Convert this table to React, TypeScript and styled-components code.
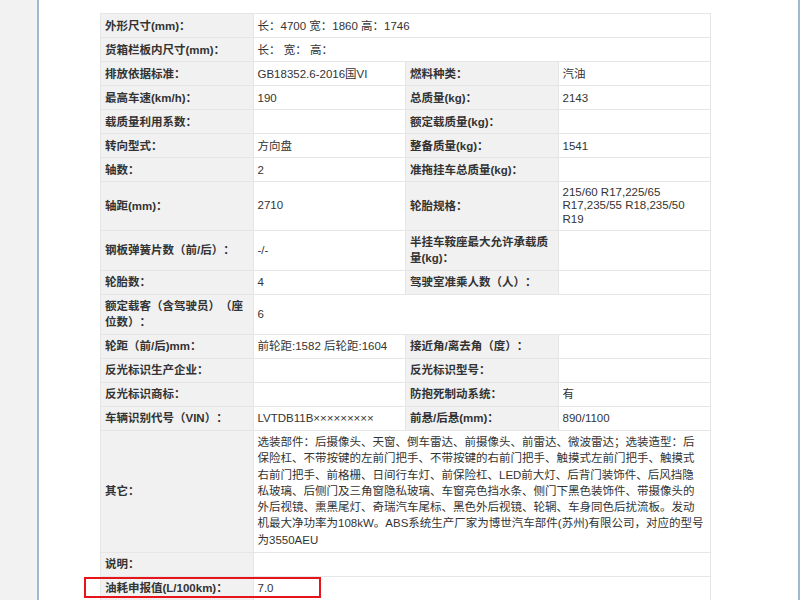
import React from "react";
import styled, { createGlobalStyle } from "styled-components";

const Global = createGlobalStyle`
  html, body {
    margin: 0;
    padding: 0;
    height: 600px;
    overflow: hidden;
    background: #f2f2f2;
  }
  * {
    text-spacing-trim: space-all;
  }
`;

const Page = styled.div`
  display: flex;
  min-height: 600px;
  background: #f2f2f2;
  font-family: "Liberation Sans", Arial, "Noto Sans CJK SC", sans-serif;
  font-size: 11.5px;
  color: #333;
`;

const Sheet = styled.div`
  position: relative;
  margin-left: 37px;
  width: 733px;
  min-height: 600px;
  background: #fff;
  border-left: 2px solid #a2b7d1;
  border-right: 2px solid #a2b7d1;
  padding: 13px 0 0 61px;
  box-sizing: content-box;
`;

const Table = styled.table`
  width: 611px;
  border-collapse: collapse;
  table-layout: fixed;
  border: 1px solid #e4e4e4;
`;

const Cell = styled.td<{ $lh?: number }>`
  border: 1px solid #e6e6e6;
  padding: 3.5px 6px 3.5px 4px;
  vertical-align: middle;
  line-height: ${(p) => (p.$lh ? `${p.$lh}px` : "16px")};
  text-spacing-trim: space-all;
`;

const Label = styled(Cell)`
  background: #f1f1f1;
  font-weight: bold;
  color: #333;
`;

const Value = styled(Cell)`
  background: #fff;
  color: #333;
`;

const Highlight = styled.div`
  position: absolute;
  left: 45px;
  top: 577px;
  width: 233px;
  height: 17px;
  border: 2px solid #e8141b;
`;

type Quad = { cells: [string, string, string, string]; lh?: number };
type Wide = { label: string; value: string; lh?: number };

const rows: Array<Quad | Wide> = [
  { label: "外形尺寸(mm)：", value: "长：4700 宽：1860 高：1746" },
  { label: "货箱栏板内尺寸(mm)：", value: "长： 宽： 高：" },
  { cells: ["排放依据标准：", "GB18352.6-2016国VI", "燃料种类：", "汽油"] },
  { cells: ["最高车速(km/h)：", "190", "总质量(kg)：", "2143"] },
  { cells: ["载质量利用系数：", "", "额定载质量(kg)：", ""] },
  { cells: ["转向型式：", "方向盘", "整备质量(kg)：", "1541"] },
  { cells: ["轴数：", "2", "准拖挂车总质量(kg)：", ""] },
  {
    cells: ["轴距(mm)：", "2710", "轮胎规格：", "215/60 R17,225/65 R17,235/55 R18,235/50 R19"],
    lh: 13.5,
  },
  { cells: ["钢板弹簧片数（前/后）：", "-/-", "半挂车鞍座最大允许承载质量(kg)：", ""] },
  { cells: ["轮胎数：", "4", "驾驶室准乘人数（人）：", ""] },
  { label: "额定载客（含驾驶员）（座位数）：", value: "6" },
  { cells: ["轮距（前/后)mm：", "前轮距:1582 后轮距:1604", "接近角/离去角（度）：", ""] },
  { cells: ["反光标识生产企业：", "", "反光标识型号：", ""] },
  { cells: ["反光标识商标：", "", "防抱死制动系统：", "有"] },
  { cells: ["车辆识别代号（VIN）：", "LVTDB11B×××××××××", "前悬/后悬(mm)：", "890/1100"] },
  {
    label: "其它：",
    value:
      "选装部件：后摄像头、天窗、倒车雷达、前摄像头、前雷达、微波雷达；选装造型：后保险杠、不带按键的左前门把手、不带按键的右前门把手、触摸式左前门把手、触摸式右前门把手、前格栅、日间行车灯、前保险杠、LED前大灯、后背门装饰件、后风挡隐私玻璃、后侧门及三角窗隐私玻璃、车窗亮色挡水条、侧门下黑色装饰件、带摄像头的外后视镜、熏黑尾灯、奇瑞汽车尾标、黑色外后视镜、轮辋、车身同色后扰流板。发动机最大净功率为108kW。ABS系统生产厂家为博世汽车部件(苏州)有限公司，对应的型号为3550AEU",
    lh: 16.3,
  },
  { label: "说明：", value: "" },
  { label: "油耗申报值(L/100km)：", value: "7.0" },
];

export default function App() {
  return (
    <>
      <Global />
      <Page>
        <Sheet>
          <Table>
            <colgroup>
              <col style={{ width: "25%" }} />
              <col style={{ width: "25%" }} />
              <col style={{ width: "25%" }} />
              <col style={{ width: "25%" }} />
            </colgroup>
            <tbody>
              {rows.map((r, i) =>
                "cells" in r ? (
                  <tr key={i}>
                    <Label>{r.cells[0]}</Label>
                    <Value $lh={r.lh}>{r.cells[1]}</Value>
                    <Label>{r.cells[2]}</Label>
                    <Value $lh={r.lh}>{r.cells[3]}</Value>
                  </tr>
                ) : (
                  <tr key={i}>
                    <Label>{r.label}</Label>
                    <Value colSpan={3} $lh={r.lh}>
                      {r.value}
                    </Value>
                  </tr>
                )
              )}
            </tbody>
          </Table>
          <Highlight />
        </Sheet>
      </Page>
    </>
  );
}
